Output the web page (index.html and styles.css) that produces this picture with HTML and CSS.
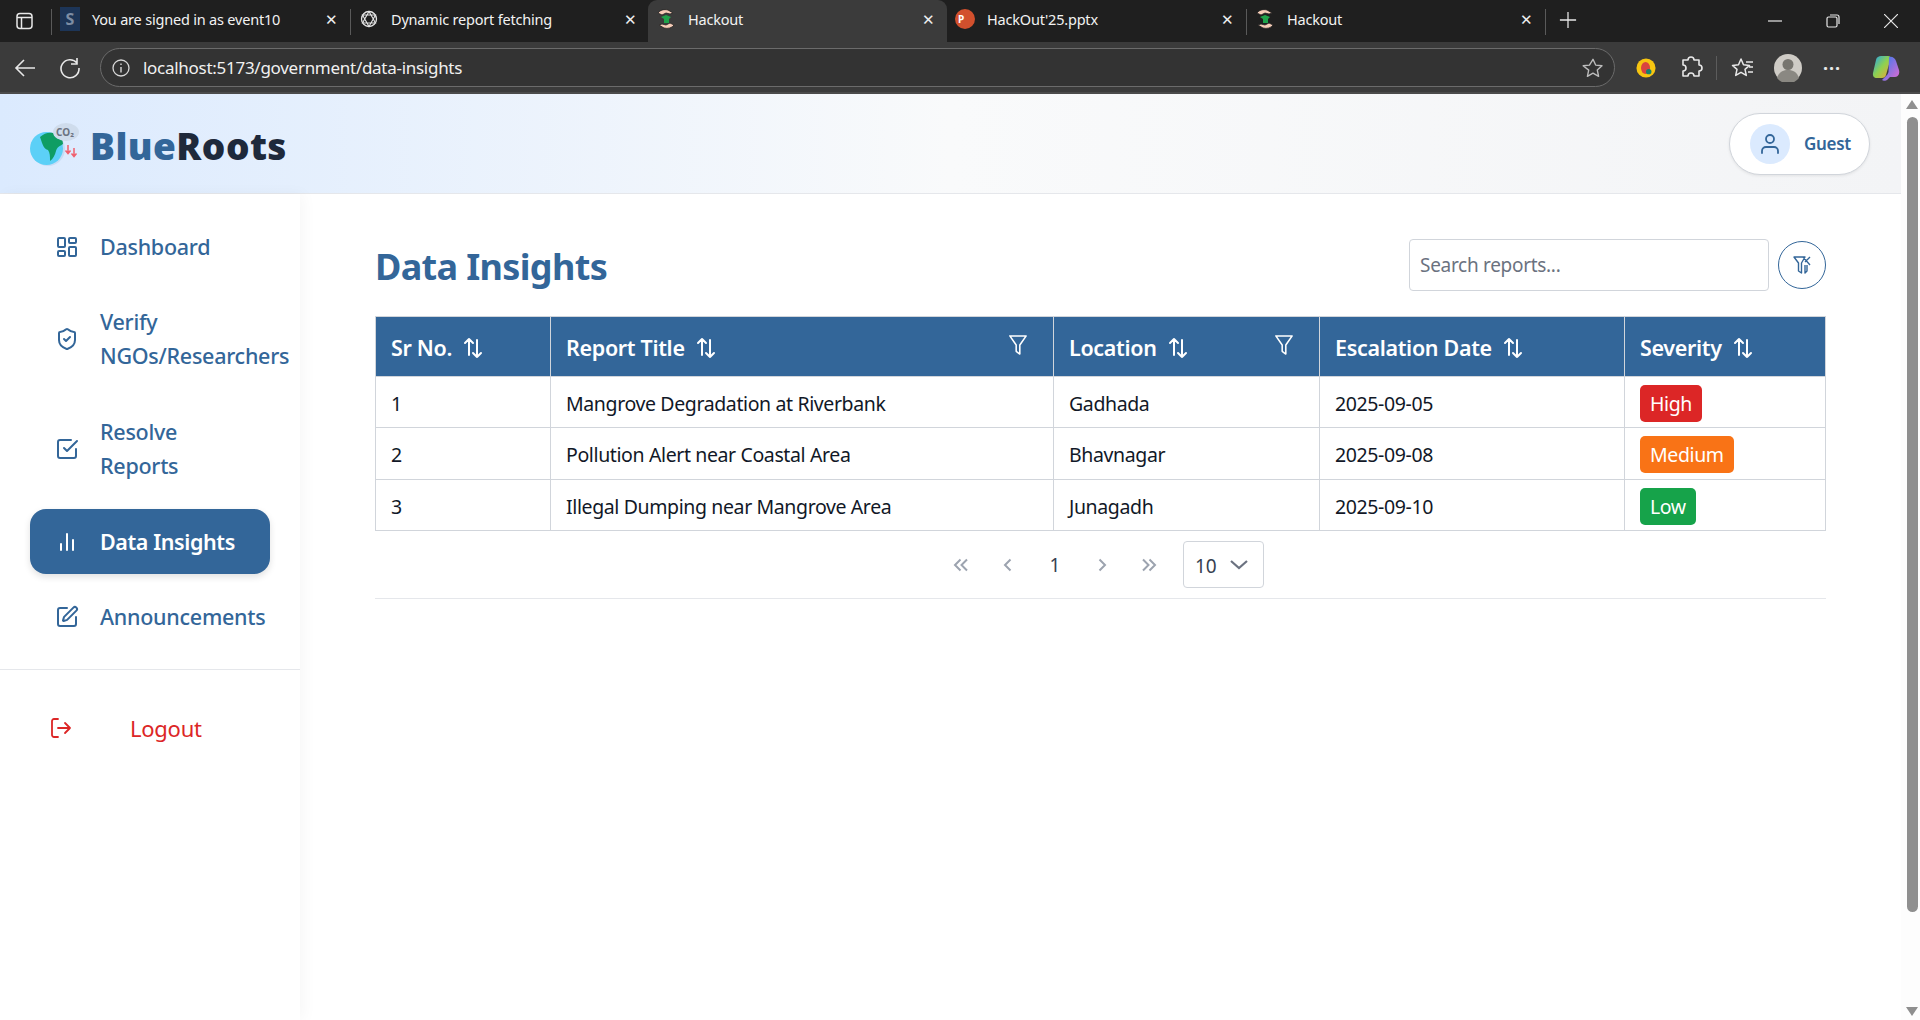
FILE: index.html
```html
<!DOCTYPE html>
<html lang="en">
<head>
<meta charset="utf-8">
<title>Hackout</title>
<link rel="stylesheet" href="styles.css">
</head>
<body>
<svg class="defs" width="0" height="0" aria-hidden="true">
  <symbol id="hand" viewBox="0 0 20 24">
    <path d="M2 6c2-3 6-4 10-3l5 3-3 1-4-1-4 2z" fill="#f6cdb8" stroke="#222" stroke-width=".8"/>
    <path d="M18 18c-2 3-6 4-10 3l-5-3 3-1 4 1 4-2z" fill="#f6cdb8" stroke="#222" stroke-width=".8"/>
    <path d="M5 10l5-2 5 2-2 2v4H8v-4z" fill="#1fa34a"/>
  </symbol>
  <symbol id="sort" viewBox="0 0 22 24">
    <path d="M7 19V3M3 7l4-4 4 4M15 4v17M11 17l4 4 4-4" fill="none" stroke="currentColor" stroke-width="2" stroke-linecap="round" stroke-linejoin="round"/>
  </symbol>
  <symbol id="funnel" viewBox="0 0 22 24">
    <path d="M2 2h18l-7 10v10l-4-3v-7z" fill="none" stroke="currentColor" stroke-width="1.700" stroke-linejoin="round"/>
  </symbol>
</svg>

<div class="browser">
  <div class="tabstrip">
    <svg class="sidebar-toggle" viewBox="0 0 20 20"><rect x="2" y="2.500" width="15" height="15" rx="3" fill="none" stroke="#e8e8e8" stroke-width="1.500"/><path d="M2 6.500h15M6.500 6.500v11" stroke="#e8e8e8" stroke-width="1.500"/></svg>
    <span class="tab-sep"></span>
    <div class="tab">
      <span class="fav-s">S</span>
      <span class="tab-title">You are signed in as event10</span>
      <span class="tab-x">✕</span>
    </div>
    <span class="tab-sep"></span>
    <div class="tab">
      <svg class="fav" viewBox="0 0 20 20"><circle cx="10" cy="10" r="7.500" fill="none" stroke="#e4e4e4" stroke-width="1.300"/><path d="M10 2.500 16.500 14H3.500zM10 17.500 3.500 6h13z" fill="none" stroke="#e4e4e4" stroke-width="1.100"/></svg>
      <span class="tab-title">Dynamic report fetching</span>
      <span class="tab-x">✕</span>
    </div>
    <div class="tab tab-active">
      <svg class="fav fav-hand"><use href="#hand"/></svg>
      <span class="tab-title">Hackout</span>
      <span class="tab-x">✕</span>
    </div>
    <div class="tab tab-plain">
      <span class="fav-p">P</span>
      <span class="tab-title">HackOut'25.pptx</span>
      <span class="tab-x">✕</span>
    </div>
    <span class="tab-sep"></span>
    <div class="tab">
      <svg class="fav fav-hand"><use href="#hand"/></svg>
      <span class="tab-title">Hackout</span>
      <span class="tab-x">✕</span>
    </div>
    <span class="tab-sep"></span>
    <svg class="new-tab" viewBox="0 0 20 20"><path d="M10 1v18M1 10h18" stroke="#e8e8e8" stroke-width="1.400"/></svg>
    <div class="window-controls">
      <svg viewBox="0 0 14 14"><path d="M0 7h14" stroke="#e8e8e8" stroke-width="1.200"/></svg>
      <svg viewBox="0 0 14 14"><rect x="1" y="3" width="10" height="10" rx="1.500" fill="none" stroke="#e8e8e8" stroke-width="1.200"/><path d="M4 1h7a2 2 0 0 1 2 2v7" fill="none" stroke="#e8e8e8" stroke-width="1.200"/></svg>
      <svg viewBox="0 0 14 14"><path d="M0 0l14 14M14 0 0 14" stroke="#e8e8e8" stroke-width="1.200"/></svg>
    </div>
  </div>
  <div class="toolbar">
    <svg class="tool tool-back" viewBox="0 0 24 24"><path d="M22 12H3M11 4l-8 8 8 8" fill="none" stroke="#e8e8e8" stroke-width="1.600"/></svg>
    <svg class="tool tool-reload" viewBox="0 0 24 24"><path d="M19 7a9 9 0 1 0 2 5M19 2v6h-6" fill="none" stroke="#e8e8e8" stroke-width="1.600"/></svg>
    <div class="address">
      <svg class="addr-info" viewBox="0 0 20 20"><circle cx="10" cy="10" r="8" fill="none" stroke="#d8d8d8" stroke-width="1.300"/><path d="M10 9v5.500M10 5.500v1.500" stroke="#d8d8d8" stroke-width="1.400"/></svg>
      <span class="addr-url">localhost:5173/government/data-insights</span>
      <svg class="addr-star" viewBox="0 0 24 24"><path d="M12 2.500l2.900 6.300 6.900.8-5.100 4.700 1.400 6.800-6.100-3.400-6.100 3.400 1.400-6.800L1.200 9.600l6.900-.8z" fill="none" stroke="#bdbdbd" stroke-width="1.500" stroke-linejoin="round"/></svg>
    </div>
    <svg class="ext ext-bug" viewBox="0 0 22 22"><circle cx="11" cy="11" r="10.500" fill="#f7c511"/><ellipse cx="10.500" cy="11" rx="5" ry="6.500" fill="#d9453f"/><circle cx="14" cy="15" r="3" fill="#17806d"/></svg>
    <svg class="ext ext-puzzle" viewBox="0 0 24 24"><path d="M9 4a3 3 0 0 1 6 0h5v5a3 3 0 0 1 0 6v5h-5a3 3 0 0 0-6 0H4v-5a3 3 0 0 0 0-6V4z" fill="none" stroke="#e8e8e8" stroke-width="1.600" stroke-linejoin="round"/></svg>
    <span class="tool-sep"></span>
    <svg class="ext ext-favs" viewBox="0 0 24 24"><path d="M10 3l2.500 5.800 6 .6-4.500 4 1.300 6-5.300-3.100-5.300 3.100 1.300-6L1.500 9.400l6-.6zM15 6h7M18 11h4M17 16h5" fill="none" stroke="#e8e8e8" stroke-width="1.500" stroke-linejoin="round"/></svg>
    <svg class="ext ext-profile" viewBox="0 0 28 28"><circle cx="14" cy="14" r="14" fill="#cfccc6"/><circle cx="14" cy="10.500" r="5.500" fill="#77756f"/><path d="M3 24c2-6 6-8 11-8s9 2 11 8a14 14 0 0 1-22 0z" fill="#8a8882"/></svg>
    <span class="ext-more">···</span>
    <svg class="ext ext-copilot" viewBox="0 0 28 28"><defs><linearGradient id="cp" x1="0" y1="0" x2="1" y2="1"><stop offset="0" stop-color="#1fa4f0"/><stop offset=".5" stop-color="#8fd14f"/><stop offset="1" stop-color="#f2a13a"/></linearGradient><linearGradient id="cp2" x1="0" y1="0" x2="1" y2="1"><stop offset="0" stop-color="#2f7bf0"/><stop offset="1" stop-color="#e56ad0"/></linearGradient></defs><path d="M9 2h7c2 0 3 1 2.500 3L14 21c-.5 2-2 3-4 3H5c-3 0-4.500-2-4-5L4 6c.5-3 3-4 5-4z" fill="url(#cp)"/><path d="M17 3c3-1 6 1 7 4l3 9c1 4-1 7-4 7h-5l-3 3c-1 1-4 1-5 0l4-4c1-1 2-2 2.500-4z" fill="url(#cp2)"/></svg>
  </div>
</div>

<div class="viewport">
  <div class="page">
    <header class="topbar">
      <div class="brand">
        <svg class="brand-logo" viewBox="0 0 50 46">
          <circle cx="18" cy="28" r="17" fill="#c8dcf5"/>
          <circle cx="16.500" cy="27.500" r="16.500" fill="#5cd0f7"/>
          <path d="M10 16c4-4 9-5 13-4 5 1 10 5 10 11-3 2-6 3-7 7-1 4-3 8-6 10 0-5 0-8-2-11-4-1-5-4-8-13z" fill="#0f9d63"/>
          <ellipse cx="36" cy="11" rx="13" ry="9" fill="#cfdcec"/>
          <text x="26" y="15" class="logo-co2">CO₂</text>
          <path d="M38 24v8M35.500 29.500 38 32.500l2.500-3M44 27v8M41.500 32.500 44 35.500l2.500-3" fill="none" stroke="#f0606e" stroke-width="1.500"/>
        </svg>
        <h1 class="brand-name"><span class="brand-blue">Blue</span>Roots</h1>
      </div>
      <button class="guest" type="button">
        <span class="guest-avatar">
          <svg class="guest-icon" viewBox="0 0 24 24"><path d="M20 21v-2a4 4 0 0 0-4-4H8a4 4 0 0 0-4 4v2" fill="none" stroke="currentColor" stroke-width="1.800" stroke-linecap="round"/><circle cx="12" cy="7" r="4" fill="none" stroke="currentColor" stroke-width="1.800"/></svg>
        </span>
        <span class="guest-name">Guest</span>
      </button>
    </header>
    <div class="body-row">
      <aside class="sidebar">
        <nav class="nav">
          <a class="nav-item">
            <svg class="nav-icon" viewBox="0 0 24 24"><rect x="3" y="3" width="7" height="9" rx="1"/><rect x="14" y="3" width="7" height="5" rx="1"/><rect x="14" y="12" width="7" height="9" rx="1"/><rect x="3" y="16" width="7" height="5" rx="1"/></svg>
            <span>Dashboard</span>
          </a>
          <a class="nav-item">
            <svg class="nav-icon" viewBox="0 0 24 24"><path d="M20 13c0 5-3.500 7.500-7.660 8.950a1 1 0 0 1-.67-.01C7.500 20.500 4 18 4 13V6a1 1 0 0 1 1-1c2 0 4.500-1.200 6.240-2.720a1.170 1.170 0 0 1 1.520 0C14.510 3.810 17 5 19 5a1 1 0 0 1 1 1z"/><path d="m9 12 2 2 4-4"/></svg>
            <span>Verify<br>NGOs/Researchers</span>
          </a>
          <a class="nav-item">
            <svg class="nav-icon" viewBox="0 0 24 24"><path d="m9 11 3 3L22 4"/><path d="M21 12v7a2 2 0 0 1-2 2H5a2 2 0 0 1-2-2V5a2 2 0 0 1 2-2h11"/></svg>
            <span>Resolve<br>Reports</span>
          </a>
          <a class="nav-item nav-active">
            <svg class="nav-icon" viewBox="0 0 24 24"><path d="M18 20V10M12 20V4M6 20v-6"/></svg>
            <span>Data Insights</span>
          </a>
          <a class="nav-item">
            <svg class="nav-icon" viewBox="0 0 24 24"><path d="M12 3H5a2 2 0 0 0-2 2v14a2 2 0 0 0 2 2h14a2 2 0 0 0 2-2v-7"/><path d="M18.375 2.625a1 1 0 0 1 3 3l-9.013 9.014a2 2 0 0 1-.853.505l-2.873.84a.5.500 0 0 1-.62-.62l.84-2.873a2 2 0 0 1 .506-.852z"/></svg>
            <span>Announcements</span>
          </a>
        </nav>
        <div class="logout-wrap">
          <a class="logout">
            <svg class="logout-icon" viewBox="0 0 24 24"><path d="M9 21H5a2 2 0 0 1-2-2V5a2 2 0 0 1 2-2h4"/><path d="m16 17 5-5-5-5M21 12H9"/></svg>
            <span>Logout</span>
          </a>
        </div>
      </aside>
      <main class="content">
        <div class="content-head">
          <h2 class="page-title">Data Insights</h2>
          <div class="tools">
            <input class="search" type="text" placeholder="Search reports...">
            <button class="clear-filter" type="button">
              <svg viewBox="0 0 24 24"><path d="M4 4h11l-3.500 6v10l-3-2v-8zM13 4l7 8M20 4l-5 5M17 12v6l-2 2v-8" fill="none" stroke="currentColor" stroke-width="1.400" stroke-linejoin="round"/></svg>
            </button>
          </div>
        </div>
        <table class="reports">
          <colgroup>
            <col class="col-sr"><col class="col-title"><col class="col-loc"><col class="col-date"><col class="col-sev">
          </colgroup>
          <thead>
            <tr>
              <th><span class="th-label">Sr No.<svg class="sort"><use href="#sort"/></svg></span></th>
              <th><div class="th-row"><span class="th-label">Report Title<svg class="sort"><use href="#sort"/></svg></span><svg class="funnel"><use href="#funnel"/></svg></div></th>
              <th><div class="th-row"><span class="th-label">Location<svg class="sort"><use href="#sort"/></svg></span><svg class="funnel"><use href="#funnel"/></svg></div></th>
              <th><span class="th-label">Escalation Date<svg class="sort"><use href="#sort"/></svg></span></th>
              <th><span class="th-label">Severity<svg class="sort"><use href="#sort"/></svg></span></th>
            </tr>
          </thead>
          <tbody>
            <tr><td>1</td><td>Mangrove Degradation at Riverbank</td><td>Gadhada</td><td>2025-09-05</td><td><span class="badge badge-high">High</span></td></tr>
            <tr><td>2</td><td>Pollution Alert near Coastal Area</td><td>Bhavnagar</td><td>2025-09-08</td><td><span class="badge badge-medium">Medium</span></td></tr>
            <tr><td>3</td><td>Illegal Dumping near Mangrove Area</td><td>Junagadh</td><td>2025-09-10</td><td><span class="badge badge-low">Low</span></td></tr>
          </tbody>
        </table>
        <div class="pager">
          <svg class="pg" viewBox="0 0 16 16"><path d="M7.500 2.500 2 8l5.500 5.500M14 2.500 8.500 8l5.500 5.500"/></svg>
          <svg class="pg" viewBox="0 0 16 16"><path d="M10.500 2.500 5 8l5.500 5.500"/></svg>
          <span class="pg-num">1</span>
          <svg class="pg" viewBox="0 0 16 16"><path d="M5.500 2.500 11 8l-5.500 5.500"/></svg>
          <svg class="pg" viewBox="0 0 16 16"><path d="M2 2.500 7.500 8 2 13.500M8.500 2.500 14 8l-5.500 5.500"/></svg>
          <div class="pg-size">
            <span class="pg-size-val">10</span>
            <svg class="pg-chev" viewBox="0 0 18 10"><path d="M1 1l8 7 8-7"/></svg>
          </div>
        </div>
      </main>
    </div>
  </div>
  <div class="scrollbar">
    <span class="sb-up"></span>
    <span class="sb-thumb"></span>
    <span class="sb-down"></span>
  </div>
</div>
</body>
</html>
```

FILE: styles.css
```css
* { box-sizing: border-box; }
html, body { margin: 0; height: 100%; overflow: hidden; }
body {
  display: flex;
  flex-direction: column;
  font-family: "Noto Sans", "Open Sans", sans-serif;
  background: #fff;
  color: #111827;
}
.defs { position: absolute; }

/* browser chrome */
.browser { flex: none; height: 94px; background: #3b3b3b; color: #f0f0f0; }
.tabstrip { height: 42px; background: #1f1f1f; display: flex; align-items: flex-start; }
.sidebar-toggle { width: 20px; height: 20px; margin: 11px 16px 0 15px; flex: none; }
.tab-sep { width: 1px; height: 26px; background: #5a5a5a; margin-top: 9px; flex: none; }
.tab {
  width: 298px;
  height: 42px;
  flex: none;
  display: flex;
  align-items: center;
  padding: 0 12px 4px 8px;
  border-radius: 9px 9px 0 0;
}
.tab-active { background: #3b3b3b; width: 299px; margin-left: -1px; }
.tab-plain { width: 299px; }
.fav, .fav-s, .fav-p { width: 20px; height: 20px; flex: none; }
.fav-hand { height: 24px; }
.fav-s {
  background: #1d3557;
  color: #7d8da3;
  font-size: 16px;
  font-weight: 700;
  line-height: 24px;
  height: 24px;
  text-align: center;
}
.fav-p {
  border-radius: 50%;
  background: #d2502d;
  color: #fff;
  font-size: 10px;
  font-weight: 700;
  line-height: 20px;
  padding-left: 3px;
}
.tab-title {
  flex: 1;
  margin-left: 12px;
  font-size: 14.500px;
  letter-spacing: -.2px;
  white-space: nowrap;
  color: #f2f2f2;
}
.tab-x { font-size: 15px; color: #eee; width: 14px; text-align: center; }
.new-tab { width: 18px; height: 18px; margin: 11px 0 0 13px; flex: none; }
.window-controls { margin-left: auto; display: flex; gap: 44px; padding: 14px 22px 0 0; }
.window-controls svg { width: 14px; height: 14px; }

.toolbar {
  height: 52px;
  display: flex;
  align-items: center;
  padding-top: 1px;
  border-bottom: 2px solid #4b4b4b;
}
.tool { width: 24px; height: 24px; flex: none; }
.tool-back { margin-left: 13px; }
.tool-reload { margin-left: 21px; }
.address {
  width: 1515px;
  height: 39px;
  margin-left: 18px;
  border: 1px solid #6b6b6b;
  border-radius: 20px;
  background: #333;
  display: flex;
  align-items: center;
  padding: 0 10px 0 10px;
}
.addr-info { width: 20px; height: 20px; flex: none; }
.addr-url { margin-left: 12px; font-size: 17px; letter-spacing: -.28px; color: #f0f0f0; }
.addr-star { width: 22px; height: 22px; margin-left: auto; }
.ext { flex: none; }
.ext-bug { width: 20px; height: 22px; margin-left: 21px; }
.ext-puzzle { width: 24px; height: 24px; margin-left: 23px; }
.tool-sep { width: 1px; height: 24px; background: #5c5c5c; margin-left: 13px; }
.ext-favs { width: 24px; height: 24px; margin-left: 14px; }
.ext-profile { width: 28px; height: 28px; margin-left: 19px; }
.ext-more { margin-left: 21px; width: 18px; text-align: center; font-size: 18px; font-weight: 700; letter-spacing: 1px; line-height: 1; color: #e8e8e8; }
.ext-copilot { width: 28px; height: 28px; margin-left: 31px; }

/* page */
.viewport { flex: 1; display: flex; min-height: 0; }
.page { width: 1901px; flex: none; display: flex; flex-direction: column; }
.topbar {
  height: 100px;
  flex: none;
  display: flex;
  align-items: center;
  justify-content: space-between;
  padding: 0 31px 0 30px;
  background: linear-gradient(to right, #dbeafe, #f9fafb 50%, #f3f4f6);
  border-bottom: 1px solid #e5e7eb;
}
.brand { display: flex; align-items: center; gap: 10px; }
.brand-logo { width: 50px; height: 46px; }
.logo-co2 { font-size: 10px; font-weight: 700; fill: #6b7280; font-family: "Noto Sans", sans-serif; }
.brand-name { margin: 3px 0 0; font-size: 37px; font-weight: 900; color: #1e293b; line-height: 1; letter-spacing: .45px; }
.brand-blue { color: #336699; }
.guest {
  width: 141px;
  height: 62px;
  display: flex;
  align-items: center;
  gap: 14px;
  padding: 0 20px;
  border: 1px solid #d1d5db;
  border-radius: 31px;
  background: #fff;
  box-shadow: 0 1px 3px rgba(0,0,0,.08);
  font-family: inherit;
}
.guest-avatar {
  width: 40px;
  height: 40px;
  flex: none;
  border-radius: 50%;
  background: #dbeafe;
  display: flex;
  align-items: center;
  justify-content: center;
  color: #336699;
}
.guest-icon { width: 24px; height: 24px; }
.guest-name { font-size: 17px; font-weight: 600; color: #336699; letter-spacing: -.3px; }

.body-row { flex: 1; display: flex; min-height: 0; }
.sidebar {
  width: 300px;
  flex: none;
  background: #fff;
  box-shadow: 4px 0 14px rgba(0,0,0,.035);
  padding-top: 20px;
  position: relative;
}
.nav { display: flex; flex-direction: column; gap: 10.700px; padding: 0 30px 19px; border-bottom: 1px solid #e5e7eb; }
.nav-item {
  display: flex;
  align-items: center;
  gap: 21px;
  padding: 15.500px 0 15.500px 25px;
  width: 240px;
  font-size: 21.500px;
  line-height: 34px;
  font-weight: 500;
  letter-spacing: -.27px;
  color: #336699;
  border-radius: 16px;
  white-space: nowrap;
}
.nav-active { background: #336699; color: #fff; font-weight: 600; letter-spacing: -.4px; box-shadow: 0 3px 7px rgba(0,0,0,.12); }
.nav-icon { width: 24px; height: 24px; flex: none; fill: none; stroke: currentColor; stroke-width: 2; stroke-linecap: round; stroke-linejoin: round; }
.logout-wrap { padding: 40px 0 0 49px; }
.logout { display: flex; align-items: center; gap: 57px; font-size: 22px; line-height: 36px; color: #dc2626; letter-spacing: -.25px; }
.logout-icon { width: 24px; height: 24px; fill: none; stroke: currentColor; stroke-width: 1.800; stroke-linecap: round; stroke-linejoin: round; flex: none; }

.content { flex: 1; min-width: 0; padding: 0 75px; }
.content-head { height: 122px; display: flex; align-items: center; justify-content: space-between; padding-top: 20px; }
.page-title { margin: 4px 0 0; font-size: 36px; line-height: 48px; font-weight: 700; color: #336699; letter-spacing: -.65px; }
.tools { display: flex; align-items: center; gap: 9px; }
.search {
  width: 360px;
  height: 52px;
  padding: 0 10px;
  border: 1px solid #d1d5db;
  border-radius: 4px;
  font-family: inherit;
  font-size: 19px;
  letter-spacing: -.3px;
  color: #111827;
  outline: none;
}
.search::placeholder { color: #6b7280; opacity: 1; }
.clear-filter {
  width: 48px;
  height: 48px;
  padding: 0;
  border: 1px solid #336699;
  border-radius: 50%;
  background: #fff;
  color: #336699;
  display: flex;
  align-items: center;
  justify-content: center;
}
.clear-filter svg { width: 24px; height: 24px; }

.reports { width: 1450px; table-layout: fixed; border-collapse: collapse; font-size: 19.500px; }
.col-sr { width: 175px; }
.col-title { width: 503px; }
.col-loc { width: 266px; }
.col-date { width: 305px; }
.col-sev { width: 201px; }
.reports th, .reports td { border: 1px solid #d1d5db; padding: 0 15px; text-align: left; white-space: nowrap; }
.reports th { height: 60px; padding-top: 2px; background: #336699; color: #fff; font-size: 21.500px; font-weight: 600; letter-spacing: -.32px; }
.reports td { height: 51px; padding-top: 2px; letter-spacing: -.38px; color: #111827; }
.reports tbody tr:nth-child(2) td { height: 52px; }
.th-label { display: inline-flex; align-items: center; gap: 10px; }
.th-row { display: flex; align-items: center; justify-content: space-between; }
.sort { width: 22px; height: 24px; flex: none; }
.funnel { width: 20px; height: 24px; color: #fff; margin: -6px 10px 0 0; flex: none; }
.badge { display: inline-block; height: 37px; line-height: 38px; padding: 0 10px; border-radius: 5px; color: #fff; vertical-align: middle; }
.badge-high { background: #dc2626; }
.badge-medium { background: #f97316; }
.badge-low { background: #16a34a; }

.pager {
  height: 68px;
  display: flex;
  align-items: center;
  justify-content: center;
  gap: 31px;
  border-bottom: 1px solid #e5e7eb;
  padding-left: 16px;
}
.pg { width: 16px; height: 16px; fill: none; stroke: #9ca3af; stroke-width: 2; flex: none; }
.pg-num { width: 16px; text-align: center; font-size: 19px; color: #374151; }
.pg-size {
  width: 81px;
  height: 47px;
  margin-left: -5px;
  border: 1px solid #d1d5db;
  border-radius: 4px;
  display: flex;
  align-items: center;
  justify-content: space-between;
  padding: 0 15px 0 11px;
  font-size: 19px;
  color: #374151;
}
.pg-size-val { padding-top: 3px; }
.pg-chev { width: 18px; height: 10px; fill: none; stroke: #6b7280; stroke-width: 2.200; }

.scrollbar { width: 19px; flex: none; background: #fdfdfd; display: flex; flex-direction: column; align-items: center; padding: 6px 0 4px 3px; }
.sb-up { width: 0; height: 0; border: 6px solid transparent; border-top: 0; border-bottom: 9px solid #8f8f8f; }
.sb-thumb { width: 11px; height: 795px; margin-top: 8px; background: #8f8f8f; border-radius: 6px; }
.sb-down { width: 0; height: 0; margin-top: auto; border: 6px solid transparent; border-bottom: 0; border-top: 9px solid #8f8f8f; }
```
